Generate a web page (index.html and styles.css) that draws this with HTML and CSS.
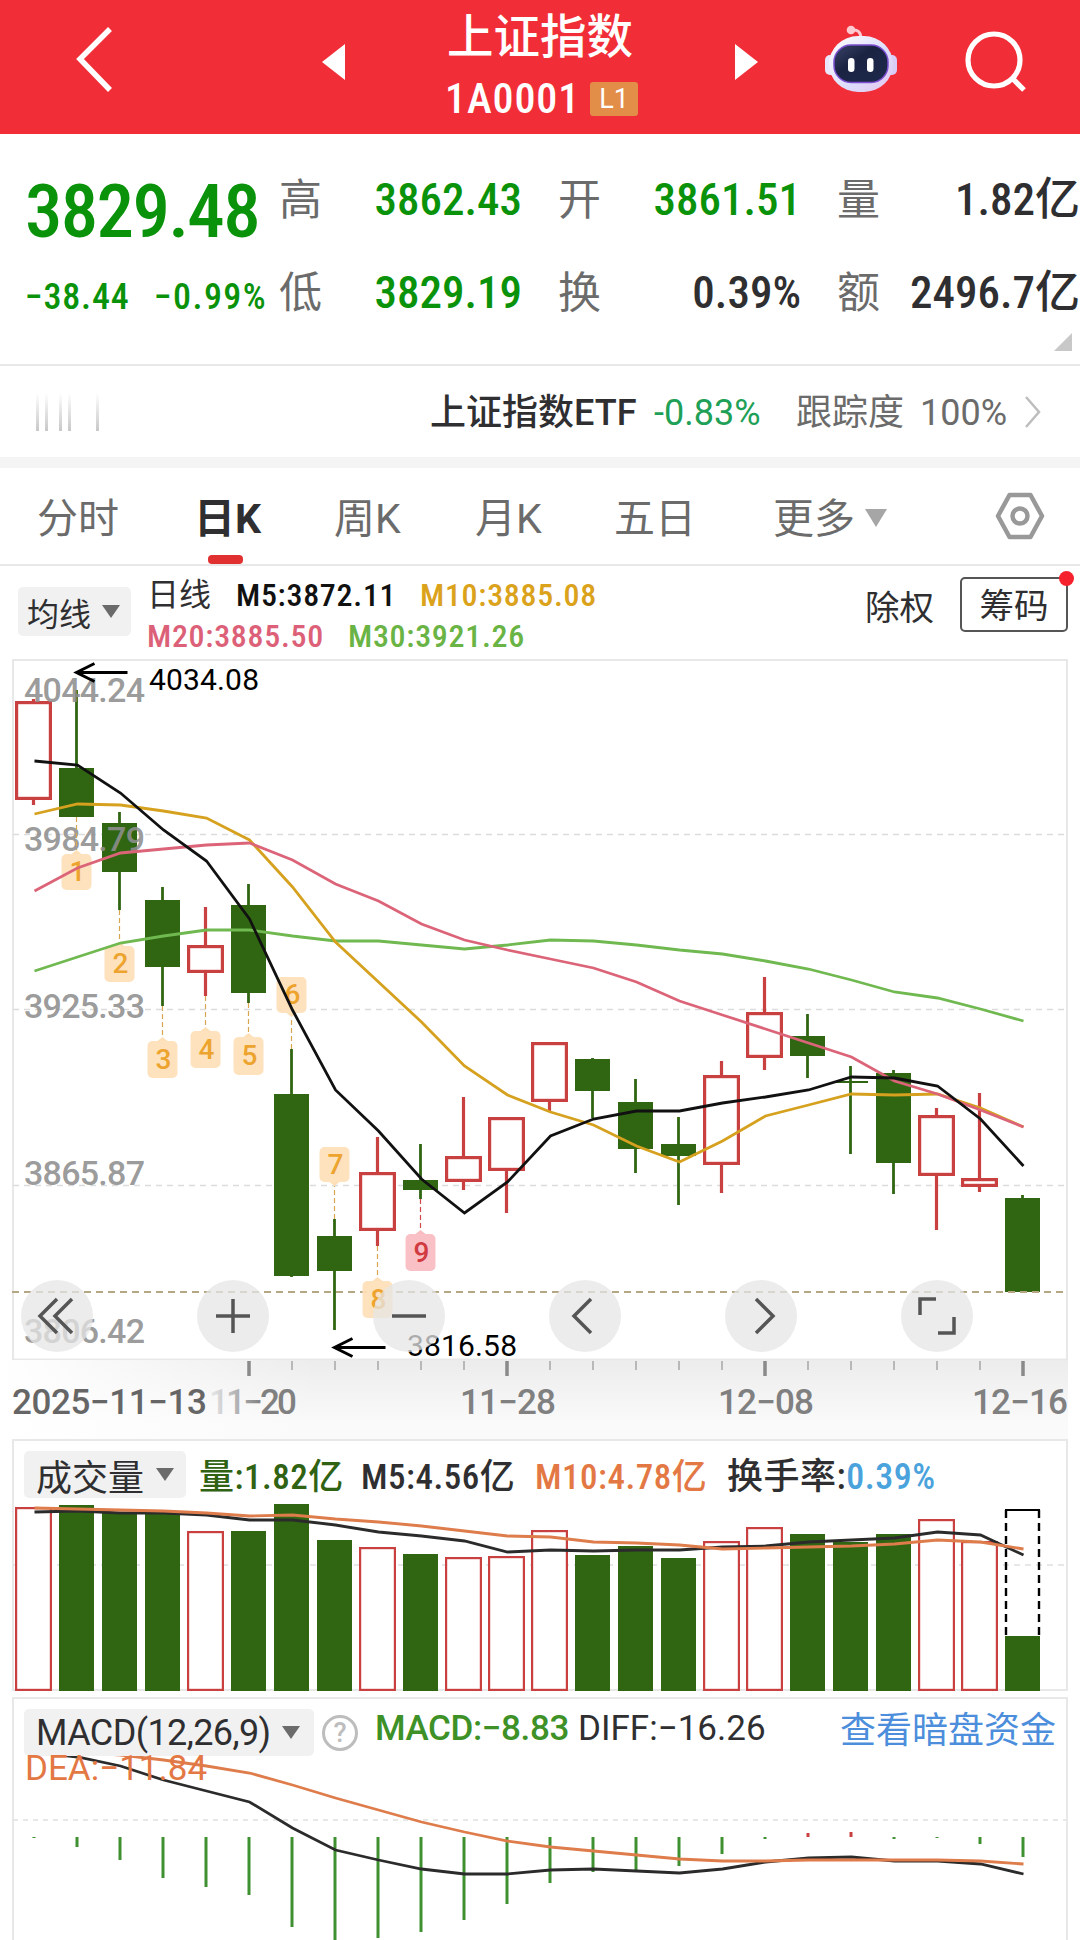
FILE: index.html
```html
<!DOCTYPE html>
<html lang="zh-CN">
<head>
    <meta charset="UTF-8">
    <meta name="viewport" content="width=device-width, initial-scale=1.0">
    <title>上证指数</title>
    <link rel="stylesheet" href="styles.css">
</head>
<body>

<header class="top">
    <svg class="back" width="40" height="70" viewBox="0 0 40 70"><path d="M35 4 L5 34 L35 65"/></svg>
    <svg class="prev" width="24" height="36" viewBox="0 0 24 36"><path d="M23 0 V36 L0 18 Z"/></svg>
    <div class="title">
        <h1>上证指数</h1>
        <div class="code"><span>1A0001</span><b class="level">L1</b></div>
    </div>
    <svg class="next" width="24" height="36" viewBox="0 0 24 36"><path d="M1 0 V36 L24 18 Z"/></svg>
    <svg class="robot" width="76" height="72" viewBox="0 0 76 72">
        <defs>
            <linearGradient id="shell" x1="0" y1="0" x2="1" y2="1">
                <stop offset="0" stop-color="#fff"/>
                <stop offset=".6" stop-color="#dcdcfb"/>
                <stop offset="1" stop-color="#e6c4ee"/>
            </linearGradient>
            <linearGradient id="face" x1="0" y1="0" x2="1" y2="1">
                <stop offset="0" stop-color="#3a4468"/>
                <stop offset=".4" stop-color="#1b2342"/>
                <stop offset="1" stop-color="#1d2a4c"/>
            </linearGradient>
        </defs>
        <path d="M29 9 Q38 8 38 18" fill="none" stroke="#ffc9d2" stroke-width="3"/>
        <circle cx="28" cy="9" r="4.3" fill="#ffc9d2"/>
        <rect x="2" y="34" width="12" height="20" rx="5" fill="#e9e6fb"/>
        <rect x="62" y="34" width="12" height="20" rx="5" fill="#d9cdf8"/>
        <rect x="6" y="15" width="64" height="56" rx="29" fill="url(#shell)"/>
        <rect x="11" y="24" width="54" height="37.500" rx="17" fill="url(#face)" stroke="#7b4fd0" stroke-width="1.500"/>
        <rect x="25" y="37" width="6.500" height="14" rx="3.200" fill="#fff"/>
        <rect x="44" y="37" width="6.500" height="14" rx="3.200" fill="#fff"/>
    </svg>
    <svg class="search" width="62" height="62" viewBox="0 0 62 62"><circle cx="29" cy="29" r="26"/><path d="M47.500 47.500 L59 59"/></svg>
</header>

<section class="quote">
    <div class="price">
        <div class="last">3829.48</div>
        <div class="change"><span>−38.44</span><span>−0.99%</span></div>
    </div>
    <dl>
        <div><dt>高</dt><dd class="down">3862.43</dd></div>
        <div><dt>开</dt><dd class="down">3861.51</dd></div>
        <div><dt>量</dt><dd>1.82亿</dd></div>
        <div><dt>低</dt><dd class="down">3829.19</dd></div>
        <div><dt>换</dt><dd>0.39%</dd></div>
        <div><dt>额</dt><dd>2496.7亿</dd></div>
    </dl>
    <i class="corner"></i>
</section>

<section class="etf">
    <div class="ghost"><i></i><i></i><i></i><i></i><i></i></div>
    <span class="etf-name">上证指数ETF</span>
    <span class="etf-change">-0.83%</span>
    <span class="etf-track">跟踪度</span>
    <span class="etf-rate">100%</span>
    <svg width="18" height="32" viewBox="0 0 18 32"><path d="M2 1 L15 16 L2 31"/></svg>
</section>

<nav class="tabs">
    <a>分时</a>
    <a class="active">日K</a>
    <a>周K</a>
    <a>月K</a>
    <a>五日</a>
    <a>更多<i class="arrow"></i></a>
    <svg width="50" height="48" viewBox="0 0 50 48"><path d="M14.500 3 H35.500 L47 24 L35.500 45 H14.500 L3 24 Z"/><circle cx="25" cy="24" r="7.500"/></svg>
</nav>

<section class="ma">
    <button class="select">均线<i class="arrow"></i></button>
    <div class="ma-list">
        <div><span class="ma-name">日线</span><span class="m5">M5:3872.11</span><span class="m10">M10:3885.08</span></div>
        <div><span class="m20">M20:3885.50</span><span class="m30">M30:3921.26</span></div>
    </div>
    <span class="exright">除权</span>
    <button class="chips">筹码<i class="dot"></i></button>
</section>

<section class="kline">
    <svg id="kline" width="1080" height="701" viewBox="0 659 1080 701"></svg>
    <div class="tools">
        <button><svg viewBox="0 0 72 72"><path d="M36 19 L19 36 L36 53 M51 19 L34 36 L51 53"/></svg></button>
        <button><svg viewBox="0 0 72 72"><path d="M19 36 H53 M36 19 V53"/></svg></button>
        <button><svg viewBox="0 0 72 72"><path d="M19 36 H53"/></svg></button>
        <button><svg viewBox="0 0 72 72"><path d="M42 19 L25 36 L42 53"/></svg></button>
        <button><svg viewBox="0 0 72 72"><path d="M31 19 L48 36 L31 53"/></svg></button>
        <button><svg viewBox="0 0 72 72"><path d="M19 35 V19 H35 M53 37 V53 H37"/></svg></button>
    </div>
</section>

<section class="dates">
    <svg id="dates" width="1080" height="79" viewBox="0 1360 1080 79"></svg>
</section>

<section class="volume">
    <svg id="volume" width="1080" height="258" viewBox="0 1439 1080 258"></svg>
    <div class="panel-head">
        <button class="select">成交量<i class="arrow"></i></button>
        <span class="v-now">量:1.82亿</span>
        <span class="v-m5">M5:4.56亿</span>
        <span class="v-m10">M10:4.78亿</span>
        <span class="v-turn">换手率:<em>0.39%</em></span>
    </div>
</section>

<section class="macd">
    <svg id="macd" width="1080" height="243" viewBox="0 1697 1080 243"></svg>
    <div class="panel-head">
        <button class="select">MACD(12,26,9)<i class="arrow"></i></button>
        <i class="help">?</i>
        <span class="v-macd">MACD:−8.83</span>
        <span class="v-diff">DIFF:−16.26</span>
        <a>查看暗盘资金</a>
    </div>
    <span class="v-dea">DEA:−11.84</span>
</section>

<script src="chart.js"></script>
</body>
</html>
```
FILE: styles.css
```css
:root {
    --red: #f12e37;
    --green: #0a930a;
    --text: #2f2f31;
    --grey: #6b6b6b;
    --line: #e8e8e8;
}

* {
    box-sizing: border-box;
    margin: 0;
    padding: 0;
}

body {
    width: 1080px;
    height: 1940px;
    overflow: hidden;
    background: #fff;
    color: var(--text);
    font-family: Roboto, "Noto Sans CJK SC", sans-serif;
    white-space: nowrap;
}

i, em {
    font-style: normal;
}

svg {
    display: block;
    flex: none;
}

button {
    border: 0;
    font: inherit;
    color: inherit;
}

.arrow {
    width: 18px;
    height: 13px;
    background: #6b6b6b;
    clip-path: polygon(0 0, 100% 0, 50% 100%);
}

/* header */
.top {
    display: flex;
    align-items: center;
    height: 134px;
    padding-left: 75px;
    background: var(--red);
    color: #fff;
}

.back {
    margin-top: -15px;
    fill: none;
    stroke: #fff;
    stroke-width: 5.5;
}

.prev, .next {
    margin-top: -10px;
    fill: #fff;
}

.prev {
    margin-left: 207px;
}

.title {
    flex: none;
    width: 185px;
    margin-left: 101px;
}

.title h1 {
    height: 68px;
    font-size: 46.5px;
    line-height: 74px;
    font-weight: 500;
}

.code {
    display: flex;
    align-items: center;
    height: 66px;
    padding-bottom: 5px;
    font-size: 42px;
    font-weight: 500;
}

.code span {
    flex: none;
    width: 143px;
    margin-left: -2px;
    font-stretch: 75%;
    letter-spacing: .9px;
}

.level {
    flex: none;
    width: 48px;
    height: 34px;
    margin-left: 2px;
    border-radius: 3px;
    background: #e28d48;
    font-size: 27px;
    line-height: 34px;
    font-weight: 400;
    text-align: center;
}

.next {
    margin-left: 102px;
}

.robot {
    margin: -20px 0 0 65px;
}

.search {
    margin: -10px 0 0 66px;
    fill: none;
    stroke: #fff;
    stroke-width: 5.2;
}

/* quote */
.quote {
    position: relative;
    display: flex;
    height: 232px;
    padding: 27px 0 0 25px;
    border-bottom: 2px solid var(--line);
}

.price {
    width: 254px;
    color: var(--green);
}

.last {
    height: 104px;
    font-size: 75px;
    line-height: 101px;
    font-weight: 500;
    font-stretch: 75%;
    letter-spacing: -1.7px;
}

.change {
    display: flex;
    height: 68px;
    font-size: 36px;
    line-height: 64px;
    font-weight: 500;
    font-stretch: 75%;
    letter-spacing: .8px;
}

.change span:first-child {
    width: 129px;
}

.change span:last-child {
    letter-spacing: 1.4px;
}

.quote dl {
    display: grid;
    grid-template-columns: repeat(3, 243px);
    grid-template-rows: 80px 106px;
    column-gap: 36px;
}

.quote dl div {
    display: flex;
    justify-content: space-between;
    line-height: 78px;
    font-size: 45px;
}

.quote dl div:nth-child(n+4) {
    line-height: 104px;
}

.quote dt {
    font-size: 43px;
    color: var(--grey);
}

.quote dd {
    font-weight: 500;
    font-stretch: 75%;
}

.quote .down {
    color: var(--green);
}

.corner {
    position: absolute;
    right: 8px;
    bottom: 13px;
    width: 18px;
    height: 18px;
    background: #c8c8c8;
    clip-path: polygon(100% 0, 100% 100%, 0 100%);
}

/* etf row */
.etf {
    display: flex;
    align-items: center;
    height: 102px;
    padding: 0 36px 0 36px;
    border-bottom: 11px solid #f4f4f4;
    font-size: 36px;
    line-height: 91px;
}

.etf span {
    padding-top: 3px;
}

.ghost {
    display: flex;
    width: 394px;
    height: 38px;
}

.ghost i {
    width: 3px;
    margin-right: 6px;
    background: linear-gradient(#fff, #c8c8c8);
}

.ghost i:nth-child(2) {
    margin-right: 11px;
}

.ghost i:nth-child(4) {
    margin-right: 25px;
}

.etf-name {
    width: 224px;
    font-weight: 500;
}

.etf-change {
    width: 142px;
    color: #1fa057;
}

.etf-track {
    width: 124px;
    color: var(--grey);
}

.etf-rate {
    width: 104px;
    color: var(--grey);
}

.etf path {
    fill: none;
    stroke: #bdbdbd;
    stroke-width: 2.5;
}

/* period tabs */
.tabs {
    display: grid;
    grid-template-columns: 160px 137px 141px 139px 159px 222px 50px;
    align-items: center;
    height: 98px;
    padding-left: 37px;
    border-bottom: 2px solid var(--line);
    color: var(--grey);
    font-size: 41px;
}

.tabs a {
    position: relative;
    height: 96px;
    line-height: 102px;
}

.tabs .active {
    margin-left: -3px;
    color: var(--text);
    font-weight: 700;
}

.tabs .active::after {
    content: "";
    position: absolute;
    left: 14px;
    bottom: 0;
    width: 35px;
    height: 9px;
    border-radius: 4px;
    background: #e03030;
}

.tabs .arrow {
    display: inline-block;
    width: 22px;
    height: 18px;
    margin: 0 0 6px 10px;
    background: #a6a6a6;
}

.tabs svg {
    fill: none;
    stroke: #999;
    stroke-width: 4.5;
    stroke-linejoin: round;
}

/* moving averages */
.ma {
    display: flex;
    align-items: flex-start;
    height: 93px;
    padding: 9px 0 0 18px;
}

.select {
    display: flex;
    flex: none;
    align-items: center;
    border-radius: 5px;
    background: #f1f1f1;
}

.ma .select {
    width: 113px;
    height: 49px;
    margin-top: 12px;
    padding-left: 9px;
    gap: 11px;
    font-size: 32px;
}

.ma-list {
    flex: none;
    width: 734px;
    padding-left: 16px;
    font-size: 32px;
    line-height: 40.5px;
    font-weight: 500;
    font-stretch: 75%;
    letter-spacing: .7px;
}

.ma-list div {
    display: flex;
}

.ma-name {
    width: 89px;
    font-weight: 400;
    letter-spacing: 0;
}

.m5 {
    width: 184px;
    color: #111;
}

.m10 {
    color: #dba21c;
}

.m20 {
    width: 201px;
    color: #dc6178;
}

.m30 {
    color: #6ab445;
}

.exright {
    flex: none;
    width: 95px;
    font-size: 34.5px;
    line-height: 66px;
}

.chips {
    position: relative;
    flex: none;
    width: 108px;
    height: 55px;
    margin-top: 2px;
    border: 2px solid #555;
    border-radius: 5px;
    background: #fff;
    font-size: 34.5px;
    line-height: 54px;
}

.dot {
    position: absolute;
    top: -8px;
    right: -8px;
    width: 15px;
    height: 15px;
    border-radius: 50%;
    background: #f5222d;
}

/* charts */
.kline, .volume, .macd {
    position: relative;
}

.tools {
    position: absolute;
    left: 21px;
    top: 621px;
    display: flex;
    gap: 104px;
}

.tools button {
    width: 72px;
    height: 72px;
    border-radius: 50%;
    background: rgba(230, 230, 230, .75);
}

.tools path {
    fill: none;
    stroke: #555;
    stroke-width: 3.5;
}

.dates {
    background: linear-gradient(#ececec, #fafafa 80%);
}

.panel-head {
    position: absolute;
    left: 24px;
    top: 12px;
    display: flex;
    align-items: center;
    height: 47px;
    font-size: 35px;
    font-weight: 500;
}

.panel-head .select {
    height: 47px;
    padding-left: 12px;
    font-weight: 400;
}

.volume .panel-head > span {
    margin-top: -3px;
    font-stretch: 75%;
    letter-spacing: .5px;
}

.volume .select {
    width: 162px;
    gap: 12px;
    margin-right: 13px;
    font-size: 36px;
}

.v-now {
    width: 162px;
    color: #2f6212;
}

.v-m5 {
    width: 174px;
}

.v-m10 {
    width: 192px;
    color: #e37844;
}

.v-turn {
    font-size: 36px;
}

.v-turn em {
    color: #4aa3dc;
}

.macd .select {
    width: 290px;
    justify-content: space-between;
    padding-right: 14px;
    font-size: 36px;
    letter-spacing: -.6px;
}

.help {
    width: 36px;
    height: 36px;
    margin: 0 17px 0 8px;
    border: 3px solid #bdbdbd;
    border-radius: 50%;
    color: #bdbdbd;
    font-size: 27px;
    line-height: 31px;
    text-align: center;
}

.v-macd, .v-diff {
    margin-top: -8px;
    letter-spacing: -.4px;
}

.v-macd {
    width: 203px;
    color: #3d9127;
}

.v-diff {
    width: 262px;
    font-weight: 400;
    letter-spacing: 0;
}

.macd .panel-head a {
    margin-top: -12px;
    color: #4c8edb;
    font-size: 36px;
    font-weight: 400;
}

.v-dea {
    position: absolute;
    left: 25px;
    top: 51px;
    color: #e37844;
    font-size: 35px;
}

#kline, #dates {
    font-family: Roboto, sans-serif;
}
```
FILE: chart.js
```js
const NS = "http://www.w3.org/2000/svg";
const GREEN = "#306612";
const RED = "#c8403f";
const STEP = 43;
const X0 = 33.5;

const x = i => X0 + STEP * i;

function add(svg, tag, attrs, text) {
    const el = document.createElementNS(NS, tag);
    for (const k in attrs) el.setAttribute(k, attrs[k]);
    if (text) el.textContent = text;
    svg.appendChild(el);
    return el;
}

function line(svg, x1, y1, x2, y2, color, width, dash) {
    const a = { x1, y1, x2, y2, stroke: color, "stroke-width": width };
    if (dash) a["stroke-dasharray"] = dash;
    add(svg, "line", a);
}

function curve(svg, ys, color) {
    const points = ys.map((y, i) => (x(i) + 1) + "," + y).join(" ");
    add(svg, "polyline", { points, fill: "none", stroke: color, "stroke-width": 2.8 });
}

function box(svg, i, top, bottom, up, stroke) {
    if (up) {
        const s = stroke || 3.2;
        add(svg, "rect", { x: x(i) - 18.5 + s / 2, y: top + s / 2, width: 37 - s, height: bottom - top - s, fill: "#fff", stroke: RED, "stroke-width": s });
    } else {
        add(svg, "rect", { x: x(i) - 17.5, y: top, width: 35, height: Math.max(bottom - top, 1.5), fill: GREEN });
    }
}

// [up, body top, body bottom, high, low]
const candles = [
    [1, 701, 800, 699, 805], [0, 768, 817, 690, 817], [0, 823, 872, 812, 910], [0, 900, 967, 887, 1006],
    [1, 945, 973, 907, 996], [0, 905, 993, 884, 1003], [0, 1094, 1276, 1049, 1277], [0, 1236, 1271, 1219, 1330],
    [1, 1172, 1231, 1137, 1246], [0, 1180, 1190, 1144, 1199], [1, 1156, 1182, 1097, 1190], [1, 1117, 1171, 1117, 1213],
    [1, 1042, 1102, 1042, 1111], [0, 1059, 1091, 1058, 1118], [0, 1102, 1149, 1079, 1173], [0, 1144, 1156, 1117, 1205],
    [1, 1075, 1165, 1061, 1193], [1, 1012, 1058, 977, 1070], [0, 1036, 1056, 1014, 1078], [0, 1081, 1083, 1066, 1154],
    [0, 1073, 1163, 1070, 1194], [1, 1115, 1176, 1108, 1230], [1, 1178, 1187, 1093, 1192], [0, 1198, 1292, 1195, 1293]
];
const ma5 = [761, 765, 793, 830, 861, 919, 1010, 1090, 1131, 1179, 1213, 1182, 1136, 1119, 1111, 1111, 1103, 1097, 1090, 1077, 1078, 1086, 1119, 1166];
const ma10 = [814, 804, 805, 811, 818, 840, 887, 942, 982, 1022, 1066, 1095, 1112, 1125, 1146, 1162, 1141, 1116, 1105, 1094, 1095, 1094, 1108, 1127];
const ma20 = [891, 868, 853, 849, 845, 843, 860, 884, 901, 924, 940, 950, 959, 968, 982, 1001, 1015, 1029, 1043, 1057, 1081, 1094, 1110, 1127];
const ma30 = [971, 957, 943, 936, 930, 930, 936, 941, 941, 945, 949, 945, 940, 941, 945, 950, 954, 961, 969, 980, 992, 998, 1009, 1021];
// [candle index, label, tip y, far edge y, line start y]
const marks = [
    [1, "1", 850, 890, 817], [2, "2", 942, 982, 910], [3, "3", 1037, 1078, 1006], [4, "4", 1027, 1068, 996],
    [5, "5", 1033, 1075, 1003], [6, "6", 1017, 977, 1049], [7, "7", 1186, 1147, 1219], [8, "8", 1277, 1318, 1246],
    [9, "9", 1230, 1271, 1199]
];

function drawKline() {
    const svg = document.getElementById("kline");
    add(svg, "rect", { x: 13, y: 660, width: 1054, height: 699.5, fill: "none", stroke: "#e8e8e8", "stroke-width": 2 });
    [834.5, 1009.5, 1185.5].forEach(y => line(svg, 13, y, 1066, y, "#dcdcdc", 1.5, "6 5"));

    candles.forEach(([up, top, bottom, high, low], i) => {
        const color = up ? RED : GREEN;
        line(svg, x(i), high, x(i), top + 1, color, up ? 3.2 : 2.8);
        line(svg, x(i), bottom - 1, x(i), low, color, up ? 3.2 : 2.8);
        box(svg, i, top, bottom, up);
    });
    line(svg, 12, 1292, 1066, 1292, "#b5a684", 2, "7 5");

    [["4044.24", 702], ["3984.79", 851], ["3925.33", 1018], ["3865.87", 1185], ["3806.42", 1343]].forEach(([t, y]) =>
        add(svg, "text", { x: 24, y, "font-size": 34, "font-weight": 500, fill: "#8e8e8e", "fill-opacity": .9, textLength: 121 }, t));

    marks.forEach(([i, label, tip, far, from]) => {
        const d = far > tip ? 1 : -1;
        const c = x(i), base = tip + 4 * d;
        const hot = label === "9";
        line(svg, c, from, c, tip, hot ? "#d04a4a" : "#d6a650", 1.2, "5 3");
        add(svg, "path", { d: `M${c} ${tip} l5 ${4 * d} h-10 z`, fill: hot ? "#f8bcc1" : "#fee0b8" });
        add(svg, "rect", { x: c - 15, y: Math.min(base, far), width: 30, height: Math.abs(far - base), rx: 5, fill: hot ? "#f8bcc1" : "#fee0b8", "fill-opacity": .92 });
        add(svg, "text", { x: c + 1, y: (base + far) / 2 + 9, "font-size": 28, "font-weight": 500, "text-anchor": "middle", fill: hot ? "#d03a40" : "#eda42e" }, label);
    });

    curve(svg, ma30, "#70b850");
    curve(svg, ma10, "#d6a11e");
    curve(svg, ma20, "#dc6478");
    curve(svg, ma5, "#111");

    // high / low pointers
    [[76.5, 672.5], [334.5, 1347.5]].forEach(([px, py]) =>
        add(svg, "path", { d: `M${px + 51} ${py} H${px} M${px + 18} ${py - 9} L${px} ${py} L${px + 18} ${py + 9}`, fill: "none", stroke: "#000", "stroke-width": 3 }));
    add(svg, "text", { x: 149, y: 690, "font-size": 30, textLength: 110 }, "4034.08");
    add(svg, "text", { x: 407, y: 1356, "font-size": 30, textLength: 110 }, "3816.58");
}

function drawDates() {
    const svg = document.getElementById("dates");
    const defs = add(svg, "defs", {});
    const g = add(defs, "linearGradient", { id: "fade" });
    add(g, "stop", { offset: 0, "stop-color": "#808080", "stop-opacity": 0.1 });
    add(g, "stop", { offset: .6, "stop-color": "#808080" });
    const side = add(defs, "linearGradient", { id: "side" });
    add(side, "stop", { offset: 0, "stop-color": "#fff" });
    add(side, "stop", { offset: 1, "stop-color": "#fff", "stop-opacity": 0 });
    add(svg, "rect", { x: 0, y: 1360, width: 320, height: 79, fill: "url(#side)" });
    add(svg, "rect", { x: 1068, y: 1360, width: 12, height: 79, fill: "#fff" });

    for (let i = 5; i < 24; i++) {
        const major = i % 6 === 5;
        line(svg, x(i) + .5, 1361, x(i) + .5, major ? 1376 : 1370, major ? "#8a8a8a" : "#b8b8b8", major ? 3.5 : 2);
    }
    [["2025−11−13", 12, 195, "#666"], ["11−20", 209, 88, "url(#fade)"], ["11−28", 460, 96, "#808080"], ["12−08", 718, 96, "#808080"], ["12−16", 972, 96, "#808080"]].forEach(([t, tx, w, fill]) =>
        add(svg, "text", { x: tx, y: 1414, "font-size": 35, "font-weight": 500, textLength: w, fill }, t));
}

const volumes = [1507, 1505, 1513, 1513, 1531, 1531, 1504, 1540, 1547, 1554, 1557, 1556, 1530, 1555, 1546, 1558, 1541, 1527, 1534, 1542, 1534, 1519, 1541, 1636];
const vma5 = [1512, 1511, 1513, 1513, 1515, 1520, 1520, 1525, 1532, 1536, 1541, 1552, 1550, 1551, 1550, 1550, 1547, 1546, 1542, 1540, 1538, 1532, 1535, 1555];
const vma10 = [1508, 1509, 1510, 1511, 1513, 1516, 1515, 1519, 1522, 1526, 1531, 1536, 1537, 1542, 1543, 1545, 1549, 1548, 1547, 1546, 1544, 1540, 1542, 1549];
const volumeUp = [0, 4, 8, 10, 11, 12, 16, 17, 21, 22];

function drawVolume() {
    const svg = document.getElementById("volume");
    add(svg, "rect", { x: 13, y: 1440, width: 1054, height: 250, fill: "#fff", stroke: "#e8e8e8", "stroke-width": 2 });
    line(svg, 13, 1565, 1066, 1565, "#e0e0e0", 1.5, "6 5");
    volumes.forEach((top, i) => box(svg, i, top, 1691, volumeUp.includes(i), 2.2));
    line(svg, 1005, 1510, 1040, 1510, "#000", 2.2);
    line(svg, 1006, 1510, 1006, 1636, "#000", 2.4, "8 5");
    line(svg, 1039, 1510, 1039, 1636, "#000", 2.4, "8 5");
    curve(svg, vma5, "#2b2b2b");
    curve(svg, vma10, "#de7c4b");
}

const bars = [1838, 1847, 1860, 1878, 1887, 1895, 1927, 1942, 1938, 1932, 1920, 1904, 1883, 1872, 1870, 1866, 1854, 1839, 1833, 1832, 1839, 1838, 1844, 1857];
const diff = [1752, 1757, 1766, 1780, 1791, 1802, 1828, 1850, 1860, 1869, 1874, 1874, 1870, 1869, 1871, 1873, 1869, 1862, 1858, 1857, 1861, 1861, 1864, 1874];
const dea = [1752, 1752, 1755, 1760, 1766, 1773, 1785, 1798, 1810, 1822, 1832, 1841, 1847, 1851, 1855, 1859, 1861, 1861, 1860, 1860, 1860, 1860, 1861, 1864];

function drawMacd() {
    const svg = document.getElementById("macd");
    add(svg, "rect", { x: 13, y: 1698, width: 1054, height: 260, fill: "#fff", stroke: "#e8e8e8", "stroke-width": 2 });
    line(svg, 13, 1820, 1066, 1820, "#e0e0e0", 1.5, "5 5");
    bars.forEach((y, i) => line(svg, x(i) + .5, 1837, x(i) + .5, y, y < 1837 ? RED : "#3f9030", 3));
    curve(svg, diff, "#2b2b2b");
    curve(svg, dea, "#de7c4b");
}

drawKline();
drawDates();
drawVolume();
drawMacd();
```
